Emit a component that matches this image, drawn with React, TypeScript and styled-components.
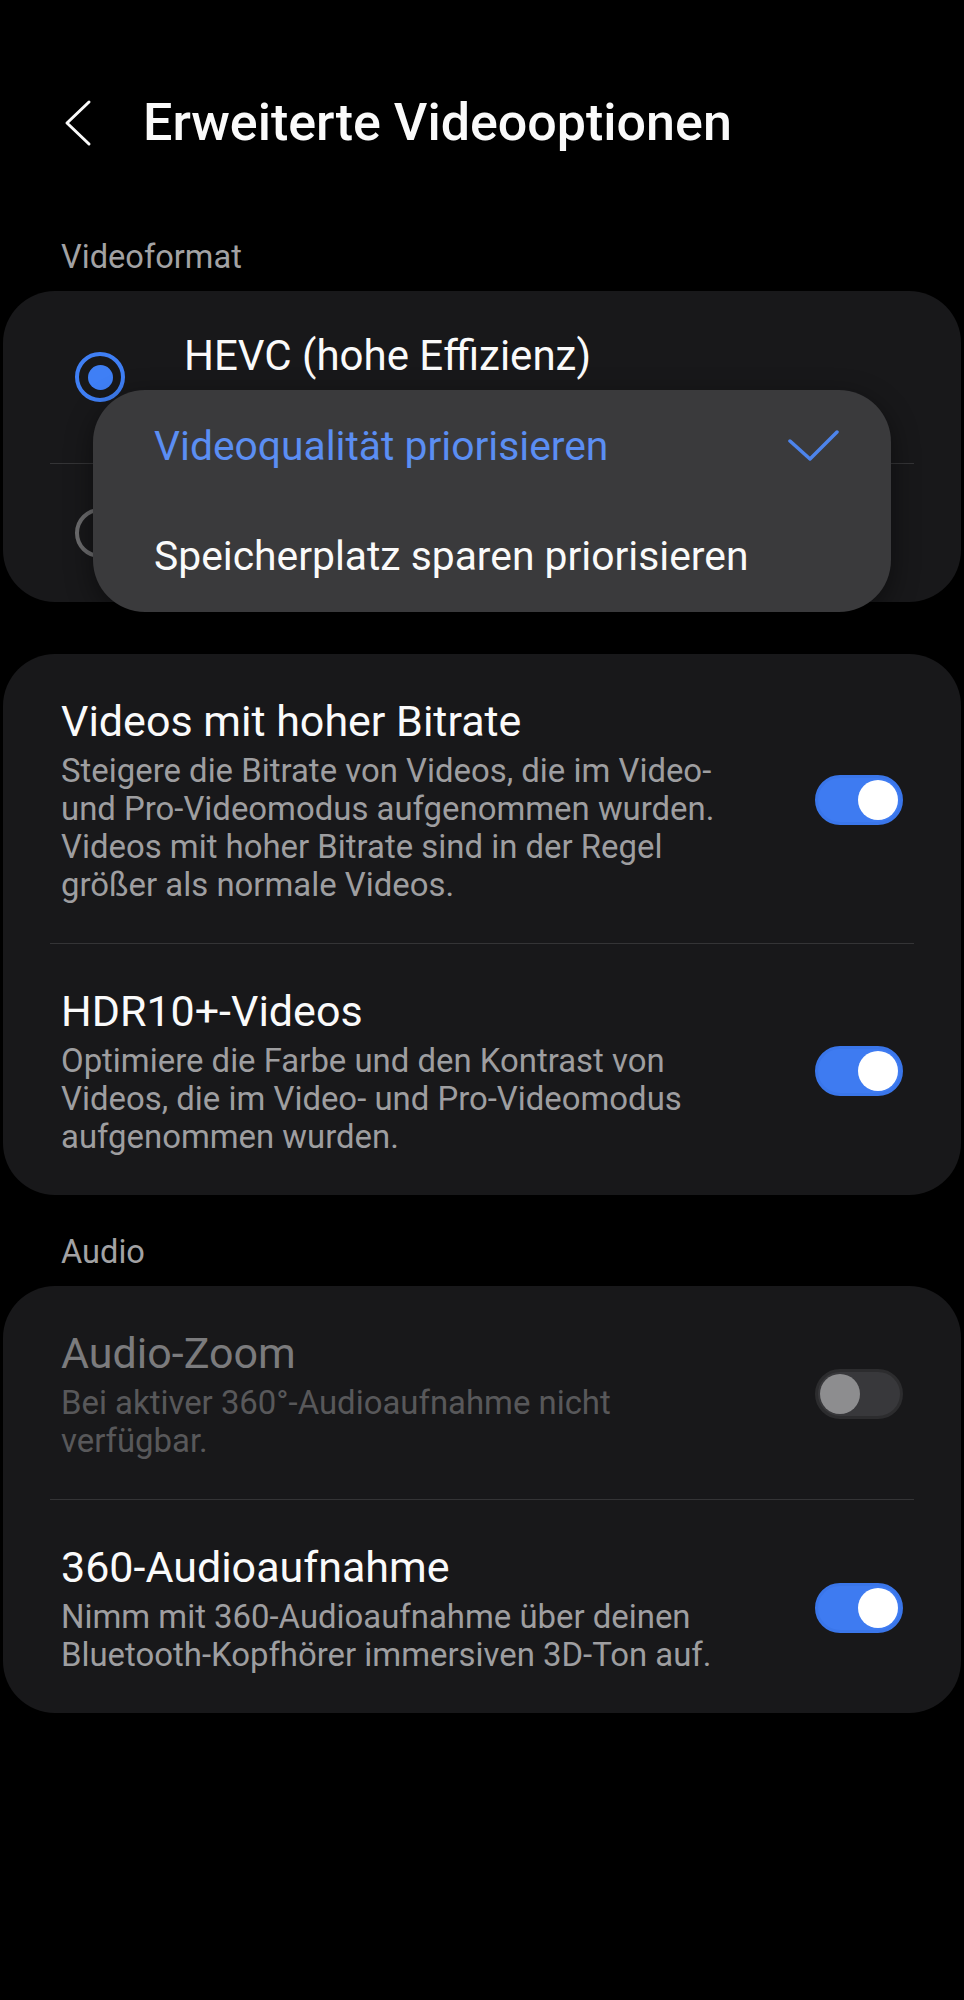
import React from 'react';
import styled, { createGlobalStyle } from 'styled-components';

const GlobalStyle = createGlobalStyle`
  html,
  body {
    margin: 0;
    padding: 0;
    background: #000;
  }

  body {
    font-family: Roboto, 'Noto Sans', sans-serif;
    -webkit-font-smoothing: antialiased;
  }

  #root {
    min-height: 2000px;
    background: #000;
  }
`;

const Screen = styled.div`
  box-sizing: border-box;
  width: 964px;
  min-height: 2000px;
  padding-top: 92px;

  background: #000;
  color: #fafafa;
`;

const Header = styled.header`
  display: flex;
  align-items: center;
  gap: 51px;

  height: 62px;
  padding-left: 64px;
`;

const Title = styled.h1`
  margin: 0;

  font-size: 52px;
  font-weight: 500;
  line-height: 62px;
`;

type SectionLabelProps = {
  $first?: boolean;
};

const SectionLabel = styled.div<SectionLabelProps>`
  margin: ${({ $first }) => ($first ? '84px' : '38px')} 0 15px;
  padding-left: 61px;

  font-size: 32.6px;
  line-height: 38px;
  color: #a2a2a4;
`;

const Card = styled.section`
  position: relative;
  margin: 0 3px;

  background: #18181a;
  border-radius: 52px;

  & + & {
    margin-top: 52px;
  }
`;

const Divider = styled.hr`
  height: 1px;
  margin: 0 47px;

  border: 0;
  background: #343436;
`;

type RadioRowProps = {
  $height: number;
};

const RadioRow = styled.div<RadioRowProps>`
  box-sizing: border-box;
  display: flex;
  align-items: center;
  gap: 59px;

  height: ${({ $height }) => $height}px;
  padding-left: 72px;
`;

const RadioText = styled.div`
  align-self: flex-start;
  padding-top: 40px;

  font-size: 42px;
  line-height: 50px;
`;

type RadioProps = {
  $checked?: boolean;
};

const Radio = styled.span<RadioProps>`
  box-sizing: border-box;
  display: flex;
  justify-content: center;
  align-items: center;
  flex: none;

  width: 50px;
  height: 50px;

  border: ${({ $checked }) => ($checked ? '4.5px solid #3f7ff5' : '4px solid #6c6c6e')};
  border-radius: 50%;

  &::after {
    content: '';

    display: ${({ $checked }) => ($checked ? 'block' : 'none')};
    width: 25px;
    height: 25px;

    border-radius: 50%;
    background: #3f7ff5;
  }
`;

const Menu = styled.ul`
  position: absolute;
  top: 99px;
  left: 90px;

  box-sizing: border-box;
  width: 798px;
  margin: 0;
  padding: 1px 51px 1px 61px;

  list-style: none;
  background: #3a3a3c;
  border-radius: 52px;
  box-shadow: 0 8px 28px rgba(0, 0, 0, 0.45);
`;

type MenuItemProps = {
  $selected?: boolean;
};

const MenuItem = styled.li<MenuItemProps>`
  display: flex;
  justify-content: space-between;
  align-items: center;

  height: 110px;

  font-size: 40.8px;
  line-height: 50px;
  color: ${({ $selected }) => ($selected ? '#5b8ef3' : '#fafafa')};
`;

const SettingRow = styled.div`
  display: flex;
  justify-content: space-between;
  align-items: center;
  gap: 24px;

  padding: 42px 58px 39px;
`;

type DisabledProps = {
  $disabled?: boolean;
};

const SettingTitle = styled.div<DisabledProps>`
  font-size: 43px;
  line-height: 50px;
  color: ${({ $disabled }) => ($disabled ? '#7b7b7d' : '#fafafa')};
`;

const SettingDesc = styled.div<DisabledProps>`
  margin-top: 6px;

  font-size: 32.9px;
  line-height: 38px;
  white-space: pre-line;
  color: ${({ $disabled }) => ($disabled ? '#58585a' : '#9e9ea0')};
`;

type ToggleProps = {
  $on: boolean;
};

const Toggle = styled.span<ToggleProps>`
  box-sizing: border-box;
  display: flex;
  justify-content: ${({ $on }) => ($on ? 'flex-end' : 'flex-start')};
  align-items: center;
  flex: none;

  width: 88px;
  height: 50px;
  padding: 0 2px;

  background: ${({ $on }) => ($on ? '#3e7bf1' : '#38383b')};
  border: 3px solid ${({ $on }) => ($on ? '#3a76ea' : '#2c2c2e')};
  border-radius: 25px;

  &::after {
    content: '';

    width: 40px;
    height: 40px;

    border-radius: 50%;
    background: ${({ $on }) => ($on ? '#ffffff' : '#8d8d8f')};
  }
`;

const BackIcon: React.FC = () => (
  <svg width="28" height="48" viewBox="0 0 28 48" fill="none">
    <polyline
      points="25,3 3,24 25,45"
      stroke="#fafafa"
      strokeWidth="3"
      strokeLinecap="round"
      strokeLinejoin="round"
    />
  </svg>
);

const CheckIcon: React.FC = () => (
  <svg width="52" height="34" viewBox="0 0 52 34" fill="none">
    <polyline
      points="2,12 22,30 49,3"
      stroke="#4d84eb"
      strokeWidth="3.5"
      strokeLinecap="round"
      strokeLinejoin="round"
    />
  </svg>
);

type Setting = {
  title: string;
  desc: string;
  on: boolean;
  disabled?: boolean;
};

const videoSettings: Setting[] = [
  {
    title: 'Videos mit hoher Bitrate',
    desc: 'Steigere die Bitrate von Videos, die im Video-\nund Pro-Videomodus aufgenommen wurden.\nVideos mit hoher Bitrate sind in der Regel\ngrößer als normale Videos.',
    on: true,
  },
  {
    title: 'HDR10+-Videos',
    desc: 'Optimiere die Farbe und den Kontrast von\nVideos, die im Video- und Pro-Videomodus\naufgenommen wurden.',
    on: true,
  },
];

const audioSettings: Setting[] = [
  {
    title: 'Audio-Zoom',
    desc: 'Bei aktiver 360°-Audioaufnahme nicht\nverfügbar.',
    on: false,
    disabled: true,
  },
  {
    title: '360-Audioaufnahme',
    desc: 'Nimm mit 360-Audioaufnahme über deinen\nBluetooth-Kopfhörer immersiven 3D-Ton auf.',
    on: true,
  },
];

const SettingsCard: React.FC<{ items: Setting[] }> = ({ items }) => (
  <Card>
    {items.map((item, i) => (
      <React.Fragment key={item.title}>
        {i > 0 && <Divider />}
        <SettingRow>
          <div>
            <SettingTitle $disabled={item.disabled}>{item.title}</SettingTitle>
            <SettingDesc $disabled={item.disabled}>{item.desc}</SettingDesc>
          </div>
          <Toggle $on={item.on} />
        </SettingRow>
      </React.Fragment>
    ))}
  </Card>
);

export default function App() {
  return (
    <Screen>
      <GlobalStyle />
      <Header>
        <BackIcon />
        <Title>Erweiterte Videooptionen</Title>
      </Header>

      <SectionLabel $first>Videoformat</SectionLabel>
      <Card>
        <RadioRow $height={172}>
          <Radio $checked />
          <RadioText>HEVC (hohe Effizienz)</RadioText>
        </RadioRow>
        <Divider />
        <RadioRow $height={138}>
          <Radio />
        </RadioRow>

        <Menu>
          <MenuItem $selected>
            Videoqualität priorisieren
            <CheckIcon />
          </MenuItem>
          <MenuItem>Speicherplatz sparen priorisieren</MenuItem>
        </Menu>
      </Card>
      <SettingsCard items={videoSettings} />

      <SectionLabel>Audio</SectionLabel>
      <SettingsCard items={audioSettings} />
    </Screen>
  );
}
